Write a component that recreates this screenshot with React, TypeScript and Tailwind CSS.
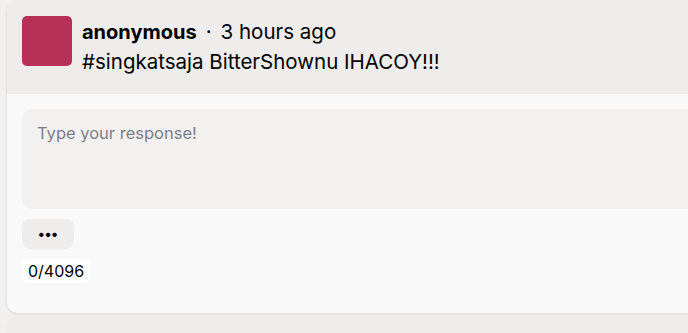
import React from "react";

export default function App() {
  return (
    <div
      className="h-[333px] w-[688px] overflow-hidden bg-[#f1f0ef] pl-[7px] pt-[1px]"
      style={{ fontFamily: "Inter, 'Noto Sans', sans-serif" }}
    >
      {/* Post card */}
      <div className="w-[720px] rounded-[10px] bg-[#f9f9f9] shadow-[0_1px_3px_rgba(0,0,0,0.12)] overflow-hidden">
        <div className="flex gap-[10px] bg-[#eeedec] px-[15px] pt-[15px] pb-[17px]">
          <div className="h-[50px] w-[50px] shrink-0 rounded-[5px] bg-[#b73057]" />
          <div className="pt-[1px]">
            <div className="flex items-center text-[20.5px] leading-[30px] text-black">
              <span className="text-[20px] font-bold">anonymous</span>
              <span className="mx-[9px]">·</span>
              <span>3 hours ago</span>
            </div>
            <div className="text-[20.5px] leading-[30px] text-black">
              #singkatsaja BitterShownu IHACOY!!!
            </div>
          </div>
        </div>

        <div className="px-[15px] pt-[15px] pb-[30px]">
          <div className="h-[100px] rounded-[10px] bg-[#f2f1f0] px-[15px] pt-[13px] text-[16.5px] leading-[22px] text-[#7b8088]">
            Type your response!
          </div>
          <button className="mt-[10px] flex h-[30px] w-[52px] items-center justify-center rounded-[8px] bg-[#eeedec] text-[14px] font-bold leading-none text-black">
            •••
          </button>
          <div className="mt-[10px] inline-block rounded-[7px] bg-white px-[6px] py-[2px] text-[16px] leading-[20px] text-black">
            0/4096
          </div>
        </div>
      </div>

      {/* next card peek */}
      <div className="mt-[5px] h-[40px] w-[720px] rounded-t-[10px] bg-[#eeedec] shadow-[0_-1px_2px_rgba(0,0,0,0.04)]" />
    </div>
  );
}
